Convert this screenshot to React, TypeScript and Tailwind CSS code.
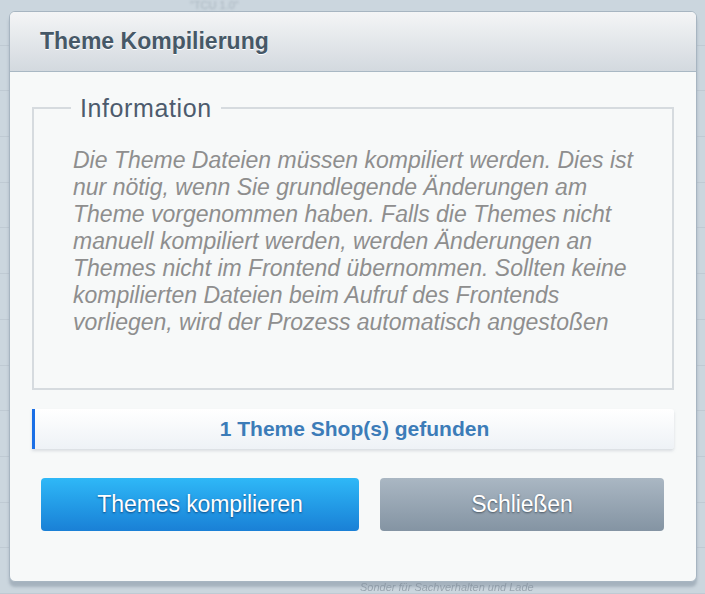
import React from "react";

const info =
  "Die Theme Dateien müssen kompiliert werden. Dies ist nur nötig, wenn Sie grundlegende Änderungen am Theme vorgenommen haben. Falls die Themes nicht manuell kompiliert werden, werden Änderungen an Themes nicht im Frontend übernommen. Sollten keine kompilierten Dateien beim Aufruf des Frontends vorliegen, wird der Prozess automatisch angestoßen";

function BackgroundPage() {
  // blurred admin page behind the modal
  const rows = [0, 44, 90, 136, 182, 228, 274, 320, 366, 412, 458, 504, 550];
  return (
    <div className="flex h-full w-full flex-col bg-[#cbd6de]">
      {rows.map((r) => (
        <div key={r} className="h-[46px] border-b border-[#bfcad3]" />
      ))}
    </div>
  );
}

export default function App() {
  return (
    <div
      className="relative h-[594px] w-[705px] overflow-hidden"
      style={{ fontFamily: '"Liberation Sans", Arial, sans-serif' }}
    >
      <BackgroundPage />
      <span className="absolute left-[190px] top-0 text-[11px] leading-[11px] text-[#a9b5bf] blur-[0.8px]">
        "TCU 1.0"
      </span>
      <span className="absolute left-[360px] top-[581px] text-[11px] leading-[12px] italic text-[#9aa6b0] blur-[0.6px]">
        Sonder für Sachverhalten und Lade
      </span>

      {/* Modal */}
      <div className="absolute left-[9px] top-[11px] flex h-[571px] w-[688px] flex-col overflow-hidden rounded-[6px] border border-[#a7b5c1] bg-[#f7f9f9] shadow-[0_5px_3px_rgba(120,135,150,0.45)]">
        <header className="flex h-[60px] shrink-0 items-center border-b border-[#a9b8c4] bg-gradient-to-b from-[#f4f5f6] to-[#d3d9df] pl-[30px]">
          <h1 className="text-[23px] font-bold text-[#465867] [text-shadow:0_1px_0_#ffffff]">
            Theme Kompilierung
          </h1>
        </header>

        <div className="flex flex-1 flex-col px-[22px] pt-[22px]">
          <fieldset className="h-[296px] border-2 border-[#d6dbdf] px-[39px] pt-[10px]">
            <legend className="-ml-[2px] px-[9px] text-[25px] leading-[28px] tracking-[0.6px] text-[#4d5b6d]">
              Information
            </legend>
            <p className="mt-[15px] max-w-[566px] text-[23px] italic leading-[27px] text-[#8e8e8e]">
              {info}
            </p>
          </fieldset>

          <div className="mt-[19px] flex h-[40px] items-center justify-center rounded-r-[3px] border-l-[3px] border-[#1a6fe6] bg-gradient-to-b from-[#ffffff] to-[#eef2f6] shadow-[0_2px_3px_rgba(160,170,180,0.35)]">
            <span className="text-[21px] font-bold text-[#3c7cb8]">
              1 Theme Shop(s) gefunden
            </span>
          </div>

          <div className="mt-[29px] flex gap-[21px] pl-[9px] pr-[10px]">
            <button className="h-[53px] w-[318px] rounded-[4px] bg-gradient-to-b from-[#2fb8f7] to-[#1a80d6] text-[23px] tracking-[-0.1px] text-white [text-shadow:0_1px_2px_rgba(0,40,90,0.7)]">
              Themes kompilieren
            </button>
            <button className="h-[53px] flex-1 rounded-[4px] bg-gradient-to-b from-[#aab7c3] to-[#8494a3] text-[23px] tracking-[-0.1px] text-white [text-shadow:0_1px_2px_rgba(40,50,60,0.7)]">
              Schließen
            </button>
          </div>
        </div>
      </div>
    </div>
  );
}
